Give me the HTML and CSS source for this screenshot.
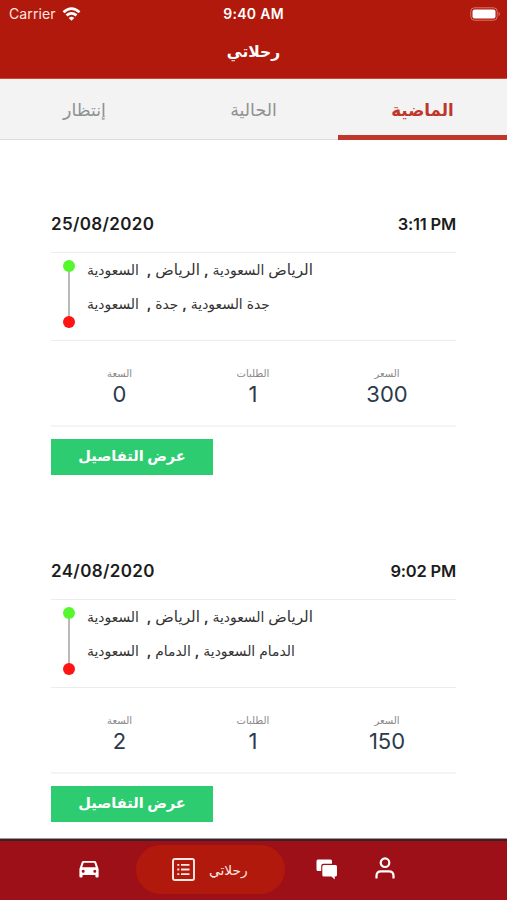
FILE: index.html
```
<!DOCTYPE html>
<html lang="ar">
<head>
    <meta charset="UTF-8">
    <title>رحلاتي</title>
    <link rel="stylesheet" href="styles.css">
</head>
<body>
    <div class="app">
        <header class="header">
            <div class="status-bar">
                <div class="carrier">
                    <span>Carrier</span>
                    <svg width="19" height="14" viewBox="0 0 18 14" fill="none" stroke="#fff" stroke-width="2.7">
                        <path d="M1 5.2Q9-2 17 5.2M4 8.4q5-4.2 10 0"/>
                        <path d="M9 13.8 6.2 10.9q2.8-2.2 5.6 0z" fill="#fff" stroke="none"/>
                    </svg>
                </div>
                <span class="clock">9:40 AM</span>
                <svg class="battery" width="31" height="14" viewBox="0 0 31 14">
                    <rect x=".8" y=".8" width="26.4" height="12.4" rx="3.6" fill="none" stroke="#d9776c"/>
                    <rect x="2.5" y="2.5" width="23" height="9" rx="2" fill="#fff"/>
                    <path d="M28.7 4.8q2.4 2.2 0 4.4z" fill="#d9776c"/>
                </svg>
            </div>
            <h1 class="title" dir="rtl">رحلاتي</h1>
        </header>

        <nav class="tabs" dir="rtl">
            <a class="tab active">الماضية</a>
            <a class="tab">الحالية</a>
            <a class="tab">إنتظار</a>
        </nav>

        <main class="trips">
            <section class="trip">
                <div class="trip-head">
                    <span class="date">25/08/2020</span>
                    <span class="time">3:11 PM</span>
                </div>
                <div class="route">
                    <div class="route-line">
                        <i class="dot from"></i>
                        <i class="dot to"></i>
                    </div>
                    <div class="places">
                        <p dir="rtl"><span class="city">الرياض</span> السعودية <b>,</b> <span class="city">الرياض</span> <b>,</b>&nbsp; السعودية</p>
                        <p dir="rtl">جدة السعودية <b>,</b> جدة <b>,</b>&nbsp; السعودية</p>
                    </div>
                </div>
                <div class="stats" dir="rtl">
                    <div class="stat"><span>السعر</span><b>300</b></div>
                    <div class="stat"><span>الطلبات</span><b>1</b></div>
                    <div class="stat"><span>السعة</span><b>0</b></div>
                </div>
                <button class="details" dir="rtl">عرض التفاصيل</button>
            </section>

            <section class="trip">
                <div class="trip-head">
                    <span class="date">24/08/2020</span>
                    <span class="time">9:02 PM</span>
                </div>
                <div class="route">
                    <div class="route-line">
                        <i class="dot from"></i>
                        <i class="dot to"></i>
                    </div>
                    <div class="places">
                        <p dir="rtl"><span class="city">الرياض</span> السعودية <b>,</b> <span class="city">الرياض</span> <b>,</b>&nbsp; السعودية</p>
                        <p dir="rtl">الدمام السعودية <b>,</b> الدمام <b>,</b>&nbsp; السعودية</p>
                    </div>
                </div>
                <div class="stats" dir="rtl">
                    <div class="stat"><span>السعر</span><b>150</b></div>
                    <div class="stat"><span>الطلبات</span><b>1</b></div>
                    <div class="stat"><span>السعة</span><b>2</b></div>
                </div>
                <button class="details" dir="rtl">عرض التفاصيل</button>
            </section>
        </main>

        <footer class="bottom-nav">
            <a class="nav-car">
                <svg width="20" height="17" viewBox="0 0 20 17">
                    <path fill="#fff" fill-rule="evenodd" d="M4.6 0h10.8q1.4 0 1.9 1.3L19.6 8v7.2q0 1.3-1.2 1.3h-.8q-1.2 0-1.2-1.3V14H3.6v1.2q0 1.3-1.2 1.3h-.8Q.4 16.5 .4 15.2V8L2.7 1.3Q3.2 0 4.6 0zM4.7 1.8 3.2 6.300h13.6l-1.500-4.500zM4.200 8.800a1.500 1.500 0 1 0 0 3 1.500 1.500 0 0 0 0-3zm11.600 0a1.500 1.500 0 1 0 0 3 1.500 1.500 0 0 0 0-3z"/>
                </svg>
            </a>
            <a class="nav-current">
                <svg width="23" height="23" viewBox="0 0 23 23" fill="none" stroke="#ffe9e4">
                    <rect x="1" y="1" width="21" height="21" rx="1.8" stroke-width="1.9"/>
                    <path stroke-width="1.8" d="M9 6.900h8.500M9 11.500h8.500M9 16.100h8.500M5.300 6.900h2M5.300 11.500h2M5.300 16.100h2"/>
                </svg>
                <span dir="rtl">رحلاتي</span>
            </a>
            <a class="nav-chat">
                <svg width="22" height="21" viewBox="0 0 22 21">
                    <path fill="#fff" d="M2 .5h12.500q1.500 0 1.500 1.500v2.800H7.500q-2.300 0-2.300 2.300V12H2Q.5 12 .5 10.500V2Q.5 .5 2 .5z"/>
                    <path fill="#fff" d="M7.800 6h11.700q1.500 0 1.500 1.500v8.600q0 1.400-1.500 1.400h-.8v3l-3.200-3H7.800q-1.500 0-1.500-1.500V7.500Q6.300 6 7.800 6z"/>
                </svg>
            </a>
            <a class="nav-user">
                <svg width="20" height="22" viewBox="0 0 20 22" fill="none" stroke="#fff" stroke-width="2.2">
                    <circle cx="10" cy="5.7" r="4.3"/>
                    <path d="M1.500 21.500v-2.700q0-4.500 4.500-4.500h8q4.500 0 4.500 4.500v2.700"/>
                </svg>
            </a>
        </footer>
    </div>
</body>
</html>
```

FILE: styles.css
```
* {
    box-sizing: border-box;
}
body {
    margin: 0;
    font-family: Inter, "DejaVu Sans", sans-serif;
    background: #fff;
}
.app {
    display: flex;
    flex-direction: column;
    width: 507px;
    height: 900px;
    overflow: hidden;
}
.header {
    flex: none;
    height: 79px;
    background: #b0190b;
    border-bottom: 1px solid #d4483c;
    color: #fff;
}
.status-bar {
    display: grid;
    grid-template-columns: 1fr auto 1fr;
    align-items: center;
    height: 27px;
    padding: 0 6px 0 9px;
    font-size: 14px;
}
.carrier {
    display: flex;
    align-items: center;
    gap: 6px;
    color: #ffe6e0;
    letter-spacing: 0.1px;
}
.clock {
    margin-right: 3px;
    font-weight: 600;
    letter-spacing: 0.3px;
}
.battery {
    justify-self: end;
}
.title {
    margin: 13px 0 0;
    font-size: 15.5px;
    line-height: 24px;
    font-weight: 700;
    text-align: center;
}
.tabs {
    flex: none;
    display: grid;
    grid-template-columns: repeat(3, 1fr);
    height: 61px;
    background: #f3f3f3;
    border-bottom: 1px solid #dcdcdc;
}
.tab {
    height: 61px;
    padding-top: 19px;
    text-align: center;
    font-size: 17.4px;
    line-height: 24px;
    color: #8f9292;
}
.tab.active {
    font-size: 16.7px;
    color: #c0352c;
    font-weight: 700;
    border-bottom: 5px solid #c0352c;
}
.trips {
    flex: 1;
    min-height: 0;
    padding: 57px 51px 0;
    overflow: hidden;
}
.trip {
    height: 347px;
}
.trip-head {
    display: flex;
    justify-content: space-between;
    height: 56px;
    padding-top: 15px;
    border-bottom: 1px solid #ededed;
    font-size: 17px;
    line-height: 24px;
    font-weight: 600;
    color: #1c1c1c;
}
.date {
    letter-spacing: 0.35px;
}
.time {
    font-size: 16.5px;
    letter-spacing: -0.2px;
}
.route {
    display: flex;
    gap: 12px;
    height: 88px;
    padding: 7px 0 0 12px;
    border-bottom: 1px solid #ededed;
}
.route-line {
    display: flex;
    flex-direction: column;
    justify-content: space-between;
    width: 12px;
    height: 68px;
    background: linear-gradient(#bababa, #bababa) center / 2px 100% no-repeat;
}
.dot {
    height: 12px;
    border-radius: 50%;
}
.dot.from {
    background: #57f72f;
}
.dot.to {
    background: #ff1414;
}
.places p {
    width: max-content;
    margin: 0 0 14px;
    font-size: 13.9px;
    line-height: 20px;
    color: #333;
    white-space: nowrap;
}
.city {
    font-size: 15.3px;
    line-height: 1;
}
.stats {
    display: grid;
    grid-template-columns: 138px 130px 137px;
    height: 86px;
    padding-top: 23px;
    border-bottom: 2px solid #f4f4f4;
    text-align: center;
}
.stat span {
    display: block;
    font-size: 10px;
    line-height: 18px;
    color: #888;
}
.stat b {
    display: block;
    font-size: 22px;
    line-height: 25px;
    font-weight: 400;
    color: #2c3a4b;
}
.details {
    display: block;
    width: 162px;
    height: 36px;
    margin-top: 12px;
    padding: 0 0 2px;
    border: none;
    background: #2ecc71;
    color: #fff;
    font-family: inherit;
    font-size: 14.6px;
    font-weight: 700;
}
.bottom-nav {
    flex: none;
    display: flex;
    align-items: center;
    height: 61px;
    padding: 0 0 2px 79px;
    background: #9d1017;
    border-top: 2px solid #3c2029;
    box-shadow: 0 -1px 0 #999;
}
.bottom-nav svg {
    display: block;
}
.nav-current {
    display: flex;
    align-items: center;
    gap: 14px;
    width: 149px;
    height: 49px;
    margin: 0 31px 0 37px;
    padding-left: 36px;
    border-radius: 25px;
    background: #b0190b;
    color: #ffe9e4;
    font-size: 13.8px;
}
.nav-user {
    margin: -3px 0 0 37px;
}
```
